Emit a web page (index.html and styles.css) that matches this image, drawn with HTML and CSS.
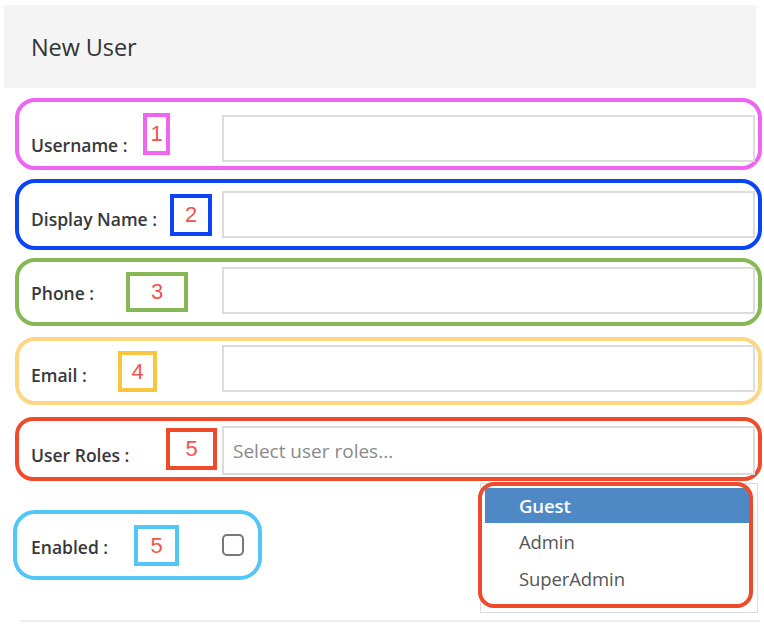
FILE: index.html
```html
<!DOCTYPE html>
<html lang="en">
<head>
<meta charset="utf-8">
<title>New User</title>
<link rel="stylesheet" href="styles.css">
</head>
<body>
<div class="page">
  <header class="header"><h1 class="title">New User</h1></header>
  <form class="form">
    <div class="row row-user">
      <label class="label">Username :</label>
      <span class="tag tag-1">1</span>
      <input class="field" type="text">
    </div>
    <div class="row row-display">
      <label class="label">Display Name :</label>
      <span class="tag tag-2">2</span>
      <input class="field" type="text">
    </div>
    <div class="row row-phone">
      <label class="label">Phone :</label>
      <span class="tag tag-3">3</span>
      <input class="field" type="text">
    </div>
    <div class="row row-email">
      <label class="label">Email :</label>
      <span class="tag tag-4">4</span>
      <input class="field" type="text">
    </div>
    <div class="row row-roles">
      <label class="label">User Roles :</label>
      <span class="tag tag-5">5</span>
      <div class="field select">Select user roles...</div>
    </div>
    <div class="row row-enabled">
      <label class="label">Enabled :</label>
      <span class="tag tag-6">5</span>
      <span class="checkbox"></span>
    </div>
  </form>
  <div class="footer-line"></div>
  <ul class="dropdown">
    <li class="option active">Guest</li>
    <li class="option">Admin</li>
    <li class="option">SuperAdmin</li>
  </ul>
  <div class="dropdown-mark"></div>
</div>
</body>
</html>
```
FILE: styles.css
```css
* { box-sizing: border-box; }
html, body { margin: 0; padding: 0; background: #fff; }
body { font-family: "Open Sans", "Noto Sans", sans-serif; color: #333; }

.page { position: relative; width: 764px; height: 628px; overflow: hidden; }

.header {
  margin: 5px 8px 0 4px;
  height: 83px;
  background: #f4f4f4;
  display: flex;
  align-items: center;
  padding-left: 27px;
}
.title { margin: 0; font-size: 23.5px; font-weight: 400; color: #333; letter-spacing: -0.1px; }

.form { display: flex; flex-direction: column; padding: 10px 2px 0 15px; }

.row {
  position: relative;
  display: flex;
  align-items: center;
  border: 4px solid #000;
  border-radius: 20px;
  padding-left: 12px;
  padding-right: 3px;
}
.label {
  flex: 0 0 191px;
  font-size: 17.5px;
  font-weight: 600;
  color: #383838;
  letter-spacing: 0;
  white-space: nowrap;
}
.field {
  flex: 1;
  height: 47px;
  border: 2px solid #dcdcdc;
  background: #fff;
  outline: none;
  margin: 0;
  font: inherit;
}

.row-user { border-color: #f064f2; padding-top: 13px; padding-bottom: 4px; }
.row-user .label { padding-top: 13px; }
.row-display { border-color: #0a44f5; padding-top: 8px; padding-bottom: 8px; margin-top: 9px; }
.row-display .label { padding-top: 9px; }
.row-phone { border-color: #86b856; padding-top: 5px; padding-bottom: 8px; margin-top: 8px; }
.row-phone .label { padding-top: 5px; }
.row-email { border-color: #fcd682; padding-top: 4px; padding-bottom: 9px; margin-top: 11px; }
.row-email .label { padding-top: 13px; }
.row-roles { border-color: #ee4a2b; padding-top: 5px; padding-bottom: 2px; margin-top: 12px; border-radius: 18px; }
.row-roles .label { padding-top: 9px; }
.select {
  height: 49px;
  display: flex;
  align-items: center;
  padding-left: 9px;
  font-size: 19px;
  color: #8a8a8a;
  letter-spacing: 0;
}

.row-enabled {
  border-color: #52c6f4;
  width: 249px;
  height: 70px;
  margin-top: 29px;
  margin-left: -2px;
  padding-left: 14px;
  padding-right: 14px;
  border-radius: 22px;
}
.row-enabled .label { padding-top: 4px; }
.checkbox {
  width: 22px;
  height: 22px;
  border: 2px solid #777;
  border-radius: 5px;
  background: #fff;
}

.tag {
  position: absolute;
  border: 4px solid;
  display: flex;
  align-items: center;
  justify-content: center;
  font-family: "Liberation Sans", Arial, sans-serif;
  font-size: 22px;
  color: #f0544e;
  background: #fff;
}
.tag-1 { border-color: #f064f2; left: 124px; top: 11px; width: 27px; height: 42px; }
.tag-2 { border-color: #0a44f5; left: 151px; top: 11px; width: 42px; height: 42px; }
.tag-3 { border-color: #86b856; left: 107px; top: 10px; width: 62px; height: 40px; }
.tag-4 { border-color: #f8c53e; left: 99px; top: 10px; width: 39px; height: 41px; }
.tag-5 { border-color: #ee4a2b; left: 147px; top: 7px; width: 51px; height: 42px; }
.tag-6 { border-color: #52c6f4; left: 117px; top: 11px; width: 45px; height: 41px; }

.footer-line {
  margin: 40px 4px 0 20px;
  height: 2px;
  background: #efefef;
}

.dropdown {
  position: absolute;
  left: 480px;
  top: 483px;
  width: 278px;
  height: 130px;
  margin: 0;
  padding: 4px 8px 4px 4px;
  list-style: none;
  border: 1px solid #dcdcdc;
  background: #fff;
}
.option {
  height: 37px;
  display: flex;
  align-items: center;
  padding-left: 34px;
  font-size: 18.5px;
  color: #555;
  letter-spacing: -0.1px;
}
.option.active { background: #4e89c6; color: #fff; font-weight: 600; height: 35px; }

.dropdown-mark {
  position: absolute;
  left: 478px;
  top: 482px;
  width: 275px;
  height: 126px;
  border: 4px solid #ee4a2b;
  border-radius: 16px;
}
```
